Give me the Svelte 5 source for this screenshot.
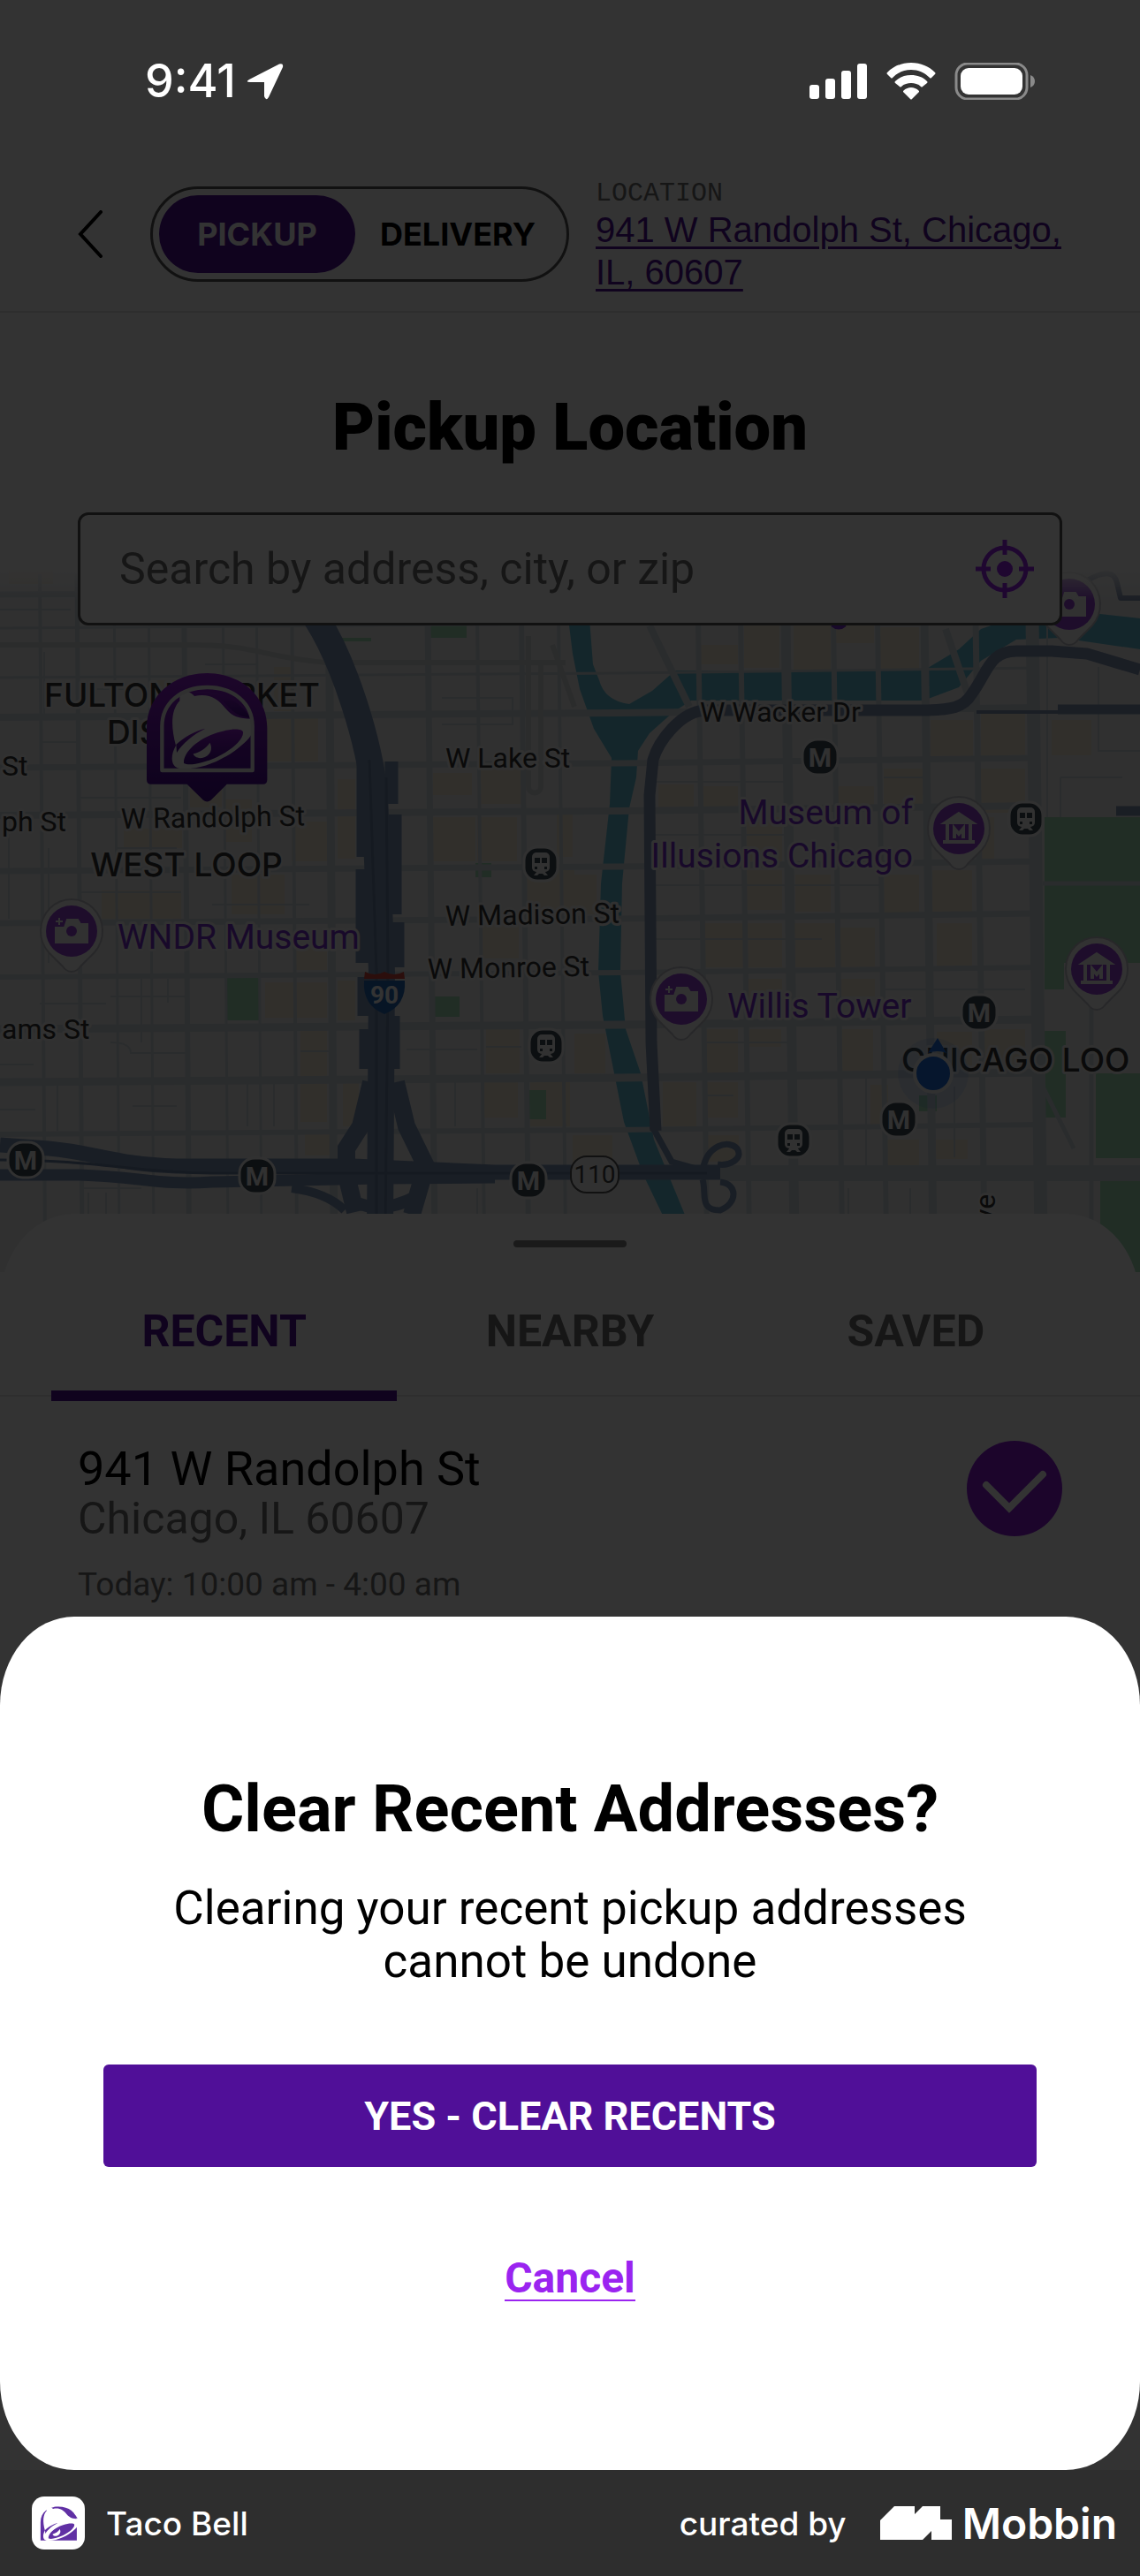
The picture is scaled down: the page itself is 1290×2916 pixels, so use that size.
<script>
	let active = $state(true);
	let mode = $state('PICKUP');
	let tab = $state('RECENT');
	let query = $state('');

	const modes = ['PICKUP', 'DELIVERY'];
	const tabs = ['RECENT', 'NEARBY', 'SAVED'];

	// street grid: [position, width]
	const streetsWest = [[45, 4], [87, 5], [129, 3], [168, 3], [208, 6], [252, 3], [290, 3], [330, 4], [372, 9]];
	const streetsMid = [[484, 7], [540, 4], [590, 6], [632, 4]];
	const streetsEast = [[790, 6], [838, 6], [889, 11], [943, 6], [993, 6], [1046, 9], [1104, 7], [1168, 15]];
	const avenues = [[668, 7], [706, 3], [762, 3], [807, 8], [864, 7], [918, 8], [981, 7], [1040, 7], [1101, 6], [1160, 9], [1220, 9], [1279, 6]];
	const lanes = [
		'M0 690H80', 'M50 738V810', 'M87 780H160', 'M232 752H290', 'M500 790H580V820H500', 'M45 840H90', 'M90 903H205', 'M130 960H200',
		'M10 930V1040', 'M55 960V1090', 'M90 1010H205', 'M240 1024H350', 'M45 1136H120', 'M125 1128H210', 'M125 1180Q148 1180 148 1192H210',
		'M160 1108V1180', 'M190 1108V1135', 'M340 1190H372', 'M65 1225V1280', 'M150 1252H200', 'M280 1225V1275', 'M310 1225V1275',
		'M0 1256H40', 'M0 1205H38', 'M460 1188H540', 'M515 1225V1275', 'M550 1185H590', 'M740 885H890', 'M1000 880H1050', 'M740 945H890',
		'M740 1002H1000', 'M740 1063H930', 'M1000 1120H1160', 'M800 1180H900', 'M800 1240H830', 'M980 1220V1320', 'M1080 1230V1310',
		'M1185 690V925', 'M1243 755V850H1290', 'M1200 880H1270', 'M1200 880V925', 'M95 1345H160', 'M100 1350V1375', 'M120 1350V1375',
		'M540 1345V1375', 'M900 1350V1375', 'M960 1345V1375', 'M1030 1345V1375'
	];
	const blocks = [
		[10, 645, 50, 16], [170, 770, 38, 30], [310, 755, 20, 50], [300, 812, 60, 50], [215, 870, 36, 44], [255, 905, 30, 48], [140, 938, 66, 22],
		[262, 990, 60, 45], [115, 1008, 90, 32], [330, 930, 40, 45], [382, 882, 20, 90], [335, 1068, 35, 30], [300, 1112, 70, 40], [382, 1110, 20, 45],
		[340, 1165, 30, 105], [388, 1225, 18, 50], [345, 1283, 28, 25], [540, 870, 50, 40], [490, 875, 44, 25], [488, 925, 50, 50], [540, 925, 45, 50],
		[545, 1045, 42, 40], [595, 985, 55, 50], [630, 920, 18, 50], [550, 1165, 38, 50], [546, 1225, 40, 40], [600, 1225, 45, 50],
		[842, 708, 40, 48], [898, 708, 42, 60], [996, 710, 44, 62], [945, 708, 44, 20], [790, 730, 45, 22], [1000, 870, 44, 48],
		[945, 890, 44, 25], [1053, 815, 48, 45], [1110, 800, 50, 60], [1110, 870, 50, 50], [1190, 815, 45, 40], [745, 888, 40, 30],
		[795, 890, 40, 28], [845, 925, 40, 50], [1000, 990, 40, 45], [900, 990, 40, 42], [795, 1045, 90, 50], [845, 985, 40, 45],
		[895, 1045, 50, 50], [950, 1050, 40, 50], [1055, 985, 45, 50], [1060, 1045, 40, 50], [745, 1105, 40, 35], [845, 1108, 40, 40],
		[950, 1108, 40, 20], [795, 1165, 40, 50], [848, 1165, 36, 20], [950, 1165, 38, 50], [1060, 1168, 40, 40],
		[1110, 1165, 50, 40], [750, 1225, 38, 50], [795, 1225, 40, 40], [985, 1228, 20, 45], [800, 1285, 36, 30], [1000, 1290, 40, 30],
		[648, 1285, 45, 35], [650, 990, 25, 45], [650, 1170, 35, 45], [1105, 925, 20, 50], [1055, 1290, 40, 22]
	];
	const parks = [
		[1182, 925, 108, 165], [1182, 1090, 22, 30], [1182, 1167, 24, 98], [1240, 1215, 50, 96], [1245, 1332, 45, 108], [257, 1103, 37, 52],
		[492, 1128, 28, 23], [599, 1234, 19, 33], [482, 708, 46, 14], [384, 722, 36, 4], [538, 977, 18, 16], [1040, 1240, 20, 18]
	];
	const metros = [[928, 857], [1108, 1146], [1017, 1267], [29, 1313], [291, 1331], [598, 1336]];
	const trains = [[612, 978], [1161, 927], [618, 1184], [898, 1291]];
	const cameras = [[1210, 684], [81, 1054], [771, 1131]];
	const museums = [[1085, 938], [1241, 1097]];

	function close() {
		active = false;
	}

	function handleKeydown(event) {
		if (event.key == 'Escape') close();
	}
</script>

<svelte:window onkeydown={handleKeydown} />

{#snippet bell()}
	<path class="paper" d="M190 143C198 118 228 130 240 144C290 134 318 152 345 185C370 214 390 220 434 221C450 245 440 276 410 302C350 358 262 398 190 390C158 384 158 345 177 312C158 240 162 190 190 160Z" />
	<path class="ink" d="M238 132C300 118 392 150 430 218C392 214 372 200 346 170C322 143 280 130 238 132Z" />
	<path class="ink" d="M178 308C202 286 240 262 277 254C236 274 200 304 180 336Z" />
	<path class="ink" d="M204 372C202 335 250 290 318 268C360 254 402 252 405 266C408 290 368 326 318 350C270 372 222 382 204 372Z" />
	<path class="paper" d="M292 302C304 322 294 348 266 354C248 356 238 348 236 340C256 336 280 322 292 302Z" />
{/snippet}

{#snippet pin(x, y)}
	<path class="pin-paper" d="M{x} {y + 46}Q{x - 6} {y + 46} {x - 10} {y + 40}L{x - 26} {y + 24}A35 36 0 1 1 {x + 26} {y + 24}L{x + 10} {y + 40}Q{x + 6} {y + 46} {x} {y + 46}Z" />
	<circle class="pin-fill" cx={x} cy={y} r="29" />
{/snippet}

<div class="page">
	<div class="screen">
		<main class="app">
			<header>
				<button class="back" aria-label="Back">
					<svg viewBox="0 0 28 54" width="28" height="54"><path d="M26 2L3 27L26 52" /></svg>
				</button>
				<div class="toggle">
					{#each modes as name}
						<button class:selected={mode == name} onclick={() => (mode = name)}>{name}</button>
					{/each}
				</div>
				<div class="where">
					<span>LOCATION</span>
					<a href="#location">941 W Randolph St, Chicago, IL, 60607</a>
				</div>
			</header>

			<h1>Pickup Location</h1>

			<div class="search">
				<input type="text" bind:value={query} placeholder="Search by address, city, or zip" aria-label="Search by address, city, or zip" />
				<button class="locate" aria-label="Use my location">
					<svg viewBox="0 0 68 68" width="68" height="68">
						<circle cx="34" cy="34" r="24" />
						<path d="M34 1V18M34 50V67M1 34H18M50 34H67" />
						<circle class="dot" cx="34" cy="34" r="9" />
					</svg>
				</button>
			</div>

			<svg class="map" viewBox="0 640 1290 800" preserveAspectRatio="xMidYMin slice" role="img" aria-label="Map of nearby locations">
				<defs>
					<linearGradient id="fade" x1="0" y1="0" x2="0" y2="1">
						<stop offset="0" stop-color="#fff" />
						<stop offset="1" stop-color="#fff" stop-opacity="0" />
					</linearGradient>
					<linearGradient id="store" x1="0" y1="0" x2="0" y2="1">
						<stop offset="0" stop-color="#9020d0" />
						<stop offset="1" stop-color="#420a8c" />
					</linearGradient>
				</defs>
				<rect class="land" x="0" y="640" width="1290" height="800" />
				{#each blocks as [x, y, w, h]}
					<rect class="block" {x} {y} width={w} height={h} />
				{/each}
				{#each parks as [x, y, w, h]}
					<rect class="park" {x} {y} width={w} height={h} />
				{/each}

				<path class="water" d="M643 700H667L671 752L678 770Q684 793 712 797L738 782L764 759H1045L1085 735L1110 712L1150 698L1200 690L1290 700V735L1200 722L1150 724L1110 748L1085 778L1045 793H782L762 806L735 830L722 850L720 880L712 915L704 1000L702 1100L708 1165L725 1215L740 1290L777 1380H752L728 1330L706 1270L694 1210L682 1150L677 1100L680 1000L690 910L692 858L672 825L656 780L648 740Z" />

				<g class="street">
					{#each lanes as d}
						<path {d} stroke-width="2" />
					{/each}
					{#each streetsWest as [x, w]}
						<path d="M{x} 650L{x + 6} 1400" stroke-width={w} />
					{/each}
					{#each streetsMid as [x, w]}
						<path d="M{x} 700L{x + 8} 1400" stroke-width={w} />
					{/each}
					{#each streetsEast as [x, w]}
						<path d="M{x} 700L{x + 10} 1400" stroke-width={w} />
					{/each}
					{#each avenues as [y, w]}
						<path d="M0 {y + 5}L700 {y}L1175 {y - 6}" stroke-width={w} />
					{/each}
					<path d="M815 1328H1290" stroke-width="18" />
					<path d="M735 708L780 800M1070 712L1100 800" stroke-width="8" />
					<path d="M1235 1110V1440M1180 1230L1215 1300M1180 1000H1290" stroke-width="5" />
				</g>
				<path class="rail" d="M0 730H220C290 730 300 745 370 750H640M598 720V890C598 900 612 900 612 890V750M625 730L650 800" />

				<g class="highway">
					<path d="M358 700C390 750 418 840 424 900L432 1100L430 1390" stroke-width="30" />
					<path d="M411 860V970M410 984V1090M412 1106V1150M414 1165V1210M443 862V910M447 922V1035M450 1044V1095M445 1150V1210" stroke-width="15" />
					<path d="M420 1225L408 1275L392 1300V1330L402 1372M448 1225L460 1275L482 1320L466 1375" stroke-width="20" />
					<path d="M395 1320Q430 1350 470 1320M400 1360Q432 1375 470 1355" stroke-width="14" />
					<path d="M0 1296L55 1300C110 1305 130 1318 200 1320H400L560 1327H815" stroke-width="17" />
					<path d="M0 1330H90C160 1332 180 1342 240 1338L430 1334L560 1333" stroke-width="13" />
					<path d="M330 1345Q370 1350 390 1370" stroke-width="10" />
					<path d="M738 1275L760 1315L795 1325C800 1295 825 1290 834 1300C842 1312 825 1320 812 1318M795 1335C800 1350 790 1370 815 1370C835 1362 835 1340 815 1338" stroke-width="7" />
				</g>
				<g class="highway-line">
					<path d="M418 860L426 1100V1390M437 880L439 1100L436 1390" />
					<path d="M0 1313C110 1313 150 1327 240 1328H800" />
				</g>
				<g class="wacker">
					<path d="M1290 758L1230 740L1190 737H1150C1120 737 1118 760 1100 785C1090 802 1075 803 1050 804H800C770 804 745 840 739 860L735 900L737 1180L742 1280" stroke-width="13" />
					<path d="M1105 806H1200" stroke-width="4" />
					<path d="M1197 803H1290M1263 918H1290" stroke-width="11" />
					<path d="M1230 657Q1260 640 1264 660L1268 677H1290" stroke-width="6" />
				</g>

				<g class="street-name">
					<text x="504" y="869">W Lake St</text>
					<text x="137" y="938" transform="rotate(-1 137 938)">W Randolph St</text>
					<text x="2" y="878">St</text>
					<text x="2" y="941">ph St</text>
					<text x="2" y="1176">ams St</text>
					<text x="792" y="817">W Wacker Dr</text>
					<text x="504" y="1048" transform="rotate(-1 504 1048)">W Madison St</text>
					<text x="484" y="1108" transform="rotate(-1 484 1108)">W Monroe St</text>
					<text x="1126" y="1384" transform="rotate(-90 1126 1384)">ve</text>
				</g>
				<g class="district">
					<text x="206" y="800" text-anchor="middle">FULTON MARKET</text>
					<text x="206" y="842" text-anchor="middle">DISTRICT</text>
					<text x="211" y="992" text-anchor="middle">WEST LOOP</text>
					<text x="1020" y="1213">CHICAGO LOO</text>
				</g>
				<g class="place">
					<text x="1033" y="933" text-anchor="end">Museum of</text>
					<text x="1033" y="982" text-anchor="end">Illusions Chicago</text>
					<text x="133" y="1074">WNDR Museum</text>
					<text x="823" y="1152">Willis Tower</text>
				</g>
				<path class="pin-stroke" d="M942 707Q949 713 956 707" />

				{#each cameras as [x, y]}
					{@render pin(x, y)}
					<path class="pin-icon" d="M{x - 18} {y - 4}H{x - 8}L{x - 5} {y - 13}H{x + 7}L{x + 10} {y - 8}H{x + 18}V{y + 13}H{x - 18}ZM{x - 14} {y - 15}V{y - 7}M{x - 18} {y - 11}H{x - 10}" />
					<circle class="pin-fill" cx={x} cy={y} r="6" />
				{/each}
				{#each museums as [x, y]}
					{@render pin(x, y)}
					<path class="pin-icon" d="M{x} {y - 18}L{x + 18} {y - 6}H{x - 18}Z" />
					<path class="pin-line" d="M{x - 13} {y - 5}V{y + 14}M{x + 13} {y - 5}V{y + 14}M{x - 18} {y + 15}H{x + 18}M{x - 5} {y + 11}V{y}L{x} {y + 6}L{x + 5} {y}V{y + 11}" />
				{/each}
				{#each metros as [x, y]}
					<rect class="badge" x={x - 20} y={y - 20} width="40" height="40" rx="17" />
					<text class="metro" {x} y={y + 11} text-anchor="middle">M</text>
				{/each}
				{#each trains as [x, y]}
					<rect class="badge" x={x - 19} y={y - 19} width="38" height="38" rx="15" />
					<rect class="badge-icon" x={x - 10} y={y - 13} width="20" height="22" rx="5" />
					<path class="badge-icon" d="M{x - 8} {y + 13}L{x - 4} {y + 8}H{x + 4}L{x + 8} {y + 13}H{x + 4}L{x + 2} {y + 11}H{x - 2}L{x - 4} {y + 13}Z" />
					<path class="badge-hole" d="M{x - 7} {y - 7}H{x - 1}V{y - 1}H{x - 7}ZM{x + 1} {y - 7}H{x + 7}V{y - 1}H{x + 1}ZM{x - 7} {y + 3}H{x - 4}V{y + 6}H{x - 7}ZM{x + 4} {y + 3}H{x + 7}V{y + 6}H{x + 4}Z" />
				{/each}

				<path class="shield-blue" d="M412 1110H458Q460 1138 435 1148Q410 1138 412 1110Z" />
				<path class="shield-red" d="M413 1100Q424 1106 435 1100Q446 1106 457 1100L458 1108H412Z" />
				<text class="shield-no" x="435" y="1136" text-anchor="middle">90</text>
				<rect class="route" x="646" y="1309" width="54" height="41" rx="18" />
				<text class="route-no" x="673" y="1339" text-anchor="middle">110</text>

				<circle class="halo" cx="1056" cy="1215" r="40" />
				<path class="me" d="M1061 1175L1071 1192Q1061 1188 1050 1192Z" />
				<circle class="me dot" cx="1056" cy="1215" r="21" />

				<g class="store" transform="translate(140 740) scale(.3334)">
					<path class="body" d="M78 252C78 142 170 66 283 66S487 142 487 252V428Q487 443 472 443H350L296 497Q283 508 270 497L215 443H93Q78 443 78 428Z" />
					{@render bell()}
					<path class="frame" d="M130 396V247C130 167 195 114 283 114S437 167 437 247V396Z" />
				</g>
				<rect x="0" y="640" width="1290" height="40" fill="url(#fade)" />
			</svg>

			<section class="sheet">
				<div class="handle"></div>
				<div class="tabs">
					{#each tabs as name}
						<button class:current={tab == name} onclick={() => (tab = name)}>{name}</button>
					{/each}
				</div>
				<div class="store-row">
					<div>
						<h2>941 W Randolph St</h2>
						<p class="city">Chicago, IL 60607</p>
						<p class="hours">Today: 10:00 am - 4:00 am</p>
					</div>
					<svg viewBox="0 0 108 108" width="108" height="108" role="img" aria-label="Selected">
						<circle cx="54" cy="54" r="54" />
						<path d="M22 50L48 76L86 38" />
					</svg>
				</div>
			</section>
		</main>

		{#if active}
			<div class="background">
				<div class="modal" role="dialog" aria-modal="true" aria-labelledby="modal-title">
					<h2 id="modal-title">Clear Recent Addresses?</h2>
					<p>Clearing your recent pickup addresses cannot be undone</p>
					<button class="confirm" onclick={close}>YES - CLEAR RECENTS</button>
					<button class="cancel" onclick={close}>Cancel</button>
				</div>
			</div>
		{/if}

		<div class="status">
			<div class="time">
				<span>9:41</span>
				<svg viewBox="0 0 42 42" width="42" height="42"><path d="M3 19L37 1.500Q42 0 41 5L25 39Q22 44 20 38V22H4Q-2 22 3 19Z" /></svg>
			</div>
			<div class="signals">
				<svg viewBox="0 0 66 42" width="66" height="42">
					<rect x="0" y="25" width="11" height="16" rx="3" />
					<rect x="18" y="18" width="11" height="23" rx="3" />
					<rect x="36" y="9" width="11" height="32" rx="3" />
					<rect x="54" y="1" width="11" height="40" rx="3" />
				</svg>
				<svg viewBox="0 0 56 42" width="56" height="42">
					<path d="M28 0C39 0 48 4 55 11Q56 12 55 13L51 17Q50 18 49 17C43 11 36 8 28 8S13 11 7 17Q6 18 5 17L1 13Q0 12 1 11C8 4 17 0 28 0Z" />
					<path d="M28 14C35 14 41 16 46 21Q47 22 46 23L41 27Q40 28 39 27C36 24 32 23 28 23S20 24 17 27Q16 28 15 27L10 23Q9 22 10 21C15 16 21 14 28 14Z" />
					<path d="M28 28C31 28 34 29 37 32Q37 33 37 33L29 41Q28 42 27 41L19 33Q19 33 19 32C22 29 25 28 28 28Z" />
				</svg>
				<svg viewBox="0 0 92 42" width="92" height="42">
					<rect class="shell" x="2" y="1" width="80" height="40" rx="13" />
					<rect x="7" y="6" width="70" height="30" rx="9" />
					<path class="nub" d="M86 14Q91 16 91 21T86 28Z" />
				</svg>
			</div>
		</div>
	</div>

	<footer>
		<div class="brand">
			<svg class="app-icon" viewBox="0 0 60 60" width="60" height="60">
				<g transform="translate(-11 -7) scale(.146)">
					<path class="ink" d="M143 388V247C143 170 205 127 283 127S424 170 424 247V388Z" />
					{@render bell()}
				</g>
			</svg>
			<span>Taco Bell</span>
		</div>
		<div class="credit">
			<span>curated by</span>
			<svg viewBox="0 0 81 38" width="81" height="38"><path d="M0 16L16 0H39V9L48 0H68V15H81V38H58V28L48 38H18L28 28V28L18 38H0Z" /></svg>
			<strong>Mobbin</strong>
		</div>
	</footer>
</div>

<style>
	:global(body) {
		margin: 0;
		background-color: #2e2e2e;
	}

	.page {
		--purple: #500f98;
		--violet: #9a24f0;
		--grey: #707070;
		min-height: 100vh;
		display: flex;
		flex-direction: column;
		font-family: Roboto, 'Open Sans', sans-serif;
		color: #000;
	}

	button {
		padding: 0;
		border: 0;
		background: none;
		font: inherit;
		color: inherit;
		cursor: pointer;
	}

	h1,
	h2,
	p {
		margin: 0;
	}

	svg {
		display: block;
		flex: none;
	}

	/* app, dimmer and status bar share one cell */
	.screen {
		flex: 1;
		display: grid;
		grid-template-columns: minmax(0, 1fr);
	}

	.app,
	.background,
	.status {
		grid-area: 1 / 1;
	}

	.app {
		background-color: #fff;
		padding-top: 178px;
	}

	header {
		display: flex;
		align-items: center;
		height: 176px;
		padding: 0 76px 0 88px;
		border-bottom: 2px solid #e4e4e4;
		box-sizing: border-box;
	}

	.back svg {
		fill: none;
		stroke: #000;
		stroke-width: 4;
		stroke-linecap: round;
	}

	.toggle {
		display: flex;
		margin: 0 30px 0 54px;
		padding: 7px;
		border: 3px solid #555;
		border-radius: 54px;
		font: 700 36px Inter, sans-serif;
	}

	.toggle button {
		height: 88px;
		padding: 0 28px;
		min-width: 222px;
		border-radius: 44px;
	}

	.toggle .selected {
		background-color: var(--purple);
		color: #fff;
	}

	.where {
		flex: 1;
		padding-top: 4px;
		font: 40px/48px 'Liberation Sans', sans-serif;
	}

	.where span {
		display: block;
		font: 30px/34px 'Liberation Mono', monospace;
		color: var(--grey);
	}

	.where a {
		color: var(--purple);
		text-decoration-thickness: 3px;
		text-underline-offset: 5px;
	}

	h1 {
		margin: 86px 0 52px;
		font-size: 74px;
		line-height: 88px;
		font-weight: 900;
		text-align: center;
	}

	.search {
		position: relative;
		display: flex;
		align-items: center;
		height: 128px;
		margin: 0 88px;
		padding: 0 28px 0 44px;
		border: 3px solid #555;
		border-radius: 12px;
		box-sizing: border-box;
		background-color: #fff;
	}

	input {
		flex: 1;
		min-width: 0;
		border: 0;
		padding: 0;
		background: none;
		outline: none;
		font: 50px Roboto, sans-serif;
		color: #000;
	}

	input::placeholder {
		color: var(--grey);
		opacity: 1;
	}

	.locate svg {
		fill: none;
		stroke: var(--violet);
		stroke-width: 5;
	}

	.locate .dot {
		fill: var(--violet);
		stroke: none;
	}

	.map {
		width: 100%;
		height: 800px;
		margin-top: -68px;
	}

	.land { fill: #eff0f1; }
	.block { fill: #f6ecd8; }
	.park { fill: #a4deba; }
	.water { fill: #66bfd6; }
	.street { fill: none; stroke: #d2dae1; }
	.rail { fill: none; stroke: #d8d9dc; stroke-width: 6; }
	.highway { fill: none; stroke: #7f97b8; }
	.highway-line { fill: none; stroke: #6a80a4; stroke-width: 3; }
	.wacker { fill: none; stroke: #8494b4; stroke-linejoin: round; }

	.map text {
		paint-order: stroke;
		stroke: #f2f2f2;
		stroke-width: 6px;
		stroke-linejoin: round;
	}

	.street-name {
		font: 32px Roboto, sans-serif;
		fill: #333;
	}

	.district {
		font: 500 37px Inter, sans-serif;
		fill: #333;
	}

	.place {
		font: 39px Roboto, sans-serif;
		fill: #7a2fd0;
	}

	.pin-paper { fill: #f8f8f8; stroke: #c4c4ca; stroke-width: 2; }
	.pin-fill { fill: #9540d8; }
	.pin-stroke { fill: none; stroke: #7a2fd0; stroke-width: 5; }
	.pin-icon { fill: #f6f6f6; stroke: #f6f6f6; stroke-width: 2; }
	.pin-line { fill: none; stroke: #f6f6f6; stroke-width: 4; }
	.badge { fill: #3c4a54; stroke: #f6f6f6; stroke-width: 3; }
	.badge-icon { fill: #f6f6f6; }
	.badge-hole { fill: #3c4a54; }

	.map .metro {
		font: 700 30px Roboto, sans-serif;
		fill: #f6f6f6;
		stroke: none;
	}

	.shield-blue { fill: #2468b8; }
	.shield-red { fill: #d4483c; }

	.map .shield-no {
		font: 700 28px Roboto, sans-serif;
		fill: #fff;
		stroke: none;
	}

	.route { fill: #f6f6f6; stroke: #555; stroke-width: 2; }

	.map .route-no {
		font: 28px Roboto, sans-serif;
		fill: #444;
		stroke: none;
	}

	.halo { fill: #4a8ae0; opacity: .15; }
	.me { fill: #2070e0; }
	.me.dot { stroke: #f6f6f6; stroke-width: 4; }
	.store .body { fill: url(#store); }
	.store .frame { fill: none; stroke: #f0f0f0; stroke-width: 13; stroke-linejoin: round; }
	.ink { fill: #6030a4; }
	.store .ink { fill: url(#store); }
	.paper { fill: #fff; }

	.sheet {
		position: relative;
		margin-top: -66px;
		padding-top: 30px;
		border-radius: 84px 84px 0 0 / 100px 100px 0 0;
		background-color: #fff;
	}

	.handle {
		width: 128px;
		height: 8px;
		margin: 0 auto;
		border-radius: 4px;
		background-color: #808080;
	}

	.tabs {
		display: flex;
		margin-top: 28px;
		padding: 0 58px;
		border-bottom: 2px solid #e4e4e4;
	}

	.tabs button {
		flex: 1;
		height: 146px;
		margin-bottom: -7px;
		border-bottom: 12px solid transparent;
		font-size: 50px;
		font-weight: 700;
		color: var(--grey);
	}

	.tabs .current {
		border-color: var(--purple);
		color: var(--purple);
	}

	.store-row {
		display: flex;
		justify-content: space-between;
		padding: 50px 88px 0;
	}

	.store-row h2 {
		font-size: 54px;
		line-height: 64px;
		font-weight: 400;
	}

	.city,
	.hours {
		color: var(--grey);
	}

	.city {
		font-size: 50px;
		line-height: 48px;
	}

	.hours {
		margin-top: 28px;
		font-size: 37px;
		line-height: 46px;
	}

	.store-row circle {
		fill: #8a1cd8;
	}

	.store-row path {
		fill: none;
		stroke: #fff;
		stroke-width: 8;
		stroke-linecap: round;
	}

	.background {
		z-index: 2;
		display: flex;
		align-items: flex-end;
		background-color: #000c;
	}

	.modal {
		flex: 1;
		display: flex;
		flex-direction: column;
		align-items: center;
		padding: 174px 117px 191px;
		border-radius: 84px / 100px;
		background-color: #fff;
		text-align: center;
	}

	.modal h2 {
		font-size: 74px;
		line-height: 88px;
		font-weight: 700;
	}

	.modal p {
		max-width: 960px;
		margin: 38px 0 87px;
		font-size: 53px;
		line-height: 60px;
	}

	.confirm {
		align-self: stretch;
		height: 116px;
		border-radius: 6px;
		background-color: var(--purple);
		color: #fff;
		font-size: 45px;
		font-weight: 700;
	}

	.cancel {
		margin-top: 102px;
		border-bottom: 2px solid var(--violet);
		font-size: 48px;
		line-height: 48px;
		font-weight: 700;
		color: var(--violet);
	}

	.status {
		z-index: 3;
		align-self: start;
		display: flex;
		justify-content: space-between;
		padding: 60px 118px 0 164px;
		color: #fff;
		font: 500 52px/64px Inter, sans-serif;
		pointer-events: none;
	}

	.time,
	.signals {
		display: flex;
		align-items: center;
	}

	.time {
		gap: 12px;
	}

	.signals {
		gap: 21px;
	}

	.status svg {
		fill: #fff;
	}

	.status .shell {
		fill: none;
		stroke: #8a8a8a;
		stroke-width: 3;
	}

	.status .nub {
		fill: #8a8a8a;
	}

	footer {
		display: flex;
		align-items: center;
		justify-content: space-between;
		height: 120px;
		padding: 0 26px 0 36px;
		background-color: #2e2e2e;
		color: #fff;
		font: 500 37px Inter, sans-serif;
	}

	.brand,
	.credit {
		display: flex;
		align-items: center;
	}

	.brand {
		gap: 24px;
	}

	.app-icon {
		border-radius: 14px;
		background-color: #fff;
	}

	.credit svg {
		margin: 0 12px 0 38px;
		fill: #fff;
	}

	strong {
		font-size: 48px;
		font-weight: 600;
	}
</style>
